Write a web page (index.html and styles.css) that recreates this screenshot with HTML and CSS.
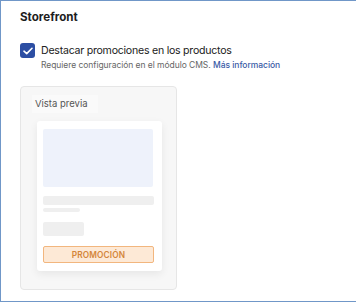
FILE: index.html
```html
<!DOCTYPE html>
<html lang="es">
<head>
    <meta charset="UTF-8">
    <meta name="viewport" content="width=device-width, initial-scale=1.0">
    <title>Storefront</title>
    <link rel="stylesheet" href="styles.css">
</head>
<body>
    <div class="panel">
        <h2 class="title">Storefront</h2>
        <div class="option">
            <span class="checkbox">
                <svg width="10" height="8" viewBox="0 0 10 8"><path d="M1 4.2 L3.7 6.6 L9 1.3" fill="none" stroke="#fff" stroke-width="1.6" stroke-linecap="round" stroke-linejoin="round"/></svg>
            </span>
            <div class="option-text">
                <p class="label">Destacar promociones en los productos</p>
                <p class="hint">Requiere configuración en el módulo CMS. <a href="#">Más información</a></p>
            </div>
        </div>
        <div class="preview">
            <span class="preview-tag">Vista previa</span>
            <div class="product">
                <div class="ph-image"></div>
                <div class="ph-line"></div>
                <div class="ph-line short"></div>
                <div class="ph-price"></div>
                <div class="promo">PROMOCIÓN</div>
            </div>
        </div>
    </div>
</body>
</html>
```
FILE: styles.css
```css
body {
    margin: 0;
    font-family: Inter, "Noto Sans", sans-serif;
    background: #fff;
    color: #1d1d1d;
}
.panel {
    height: 300px;
    border: 1px solid #7097c8;
    border-right: none;
    padding: 0 19px;
}
.title {
    margin: 0;
    padding-top: 9px;
    font-size: 11.6px;
    font-weight: 700;
    line-height: 14px;
}
.option {
    display: flex;
    gap: 6px;
    margin-top: 19px;
}
.checkbox {
    width: 15px;
    height: 15px;
    border-radius: 3px;
    background: #2c4ea3;
    display: flex;
    align-items: center;
    justify-content: center;
    flex-shrink: 0;
}
.option-text p {
    margin: 0;
}
.label {
    font-size: 10.6px;
    letter-spacing: -0.25px;
    line-height: 16px;
    color: #222;
}
.hint {
    font-size: 8.5px;
    letter-spacing: -0.05px;
    line-height: 12px;
    color: #666;
}
.hint a {
    color: #3a5ba6;
    text-decoration: none;
    font-weight: 500;
}
.preview {
    width: 157px;
    height: 204px;
    margin-top: 15px;
    background: #f7f7f7;
    border: 1px solid #e6e6e6;
    border-radius: 4px;
    padding: 8px 14px 0 11px;
    box-sizing: border-box;
}
.preview-tag {
    display: block;
    width: fit-content;
    font-size: 9.5px;
    line-height: 12px;
    color: #555;
    background: #fafafa;
    padding: 3px 10px 3px 3px;
}
.product {
    margin: 8px 0 0 5px;
    width: 125px;
    background: #fff;
    border-radius: 3px;
    box-shadow: 0 3px 8px rgba(0, 0, 0, 0.07);
    padding: 8px 7px 8px 6px;
    box-sizing: border-box;
    display: flex;
    flex-direction: column;
}
.ph-image {
    height: 58px;
    background: #eef2fb;
    border-radius: 2px;
    width: 110px;
}
.ph-line {
    margin-top: 9px;
    height: 9px;
    width: 111px;
    background: #efefef;
    border-radius: 2px;
}
.ph-line.short {
    margin-top: 3px;
    height: 4px;
    width: 37px;
}
.ph-price {
    margin-top: 10px;
    height: 14px;
    width: 41px;
    background: #efefef;
    border-radius: 2px;
}
.promo {
    margin-top: 10px;
    height: 17px;
    width: 111px;
    box-sizing: border-box;
    background: #fde9d6;
    border: 1px solid #f2b67e;
    border-radius: 2px;
    color: #d4863a;
    font-size: 8.3px;
    font-weight: 600;
    letter-spacing: 0.15px;
    display: flex;
    align-items: center;
    justify-content: center;
}
```
